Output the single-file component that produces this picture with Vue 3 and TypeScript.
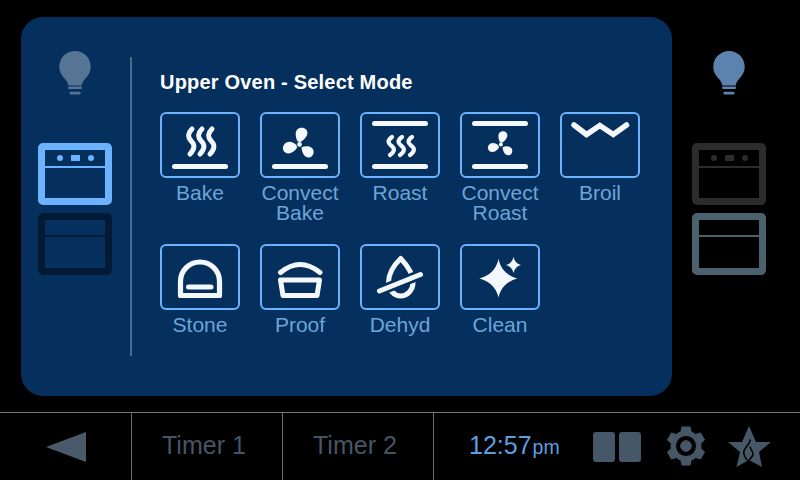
<script setup lang="ts">
interface Shape { d: string; w?: number; fill?: boolean; bg?: boolean; miter?: boolean }
interface Mode { label: string; shapes: Shape[] }

const fanBlades =
  'M37 28.500C35.500 24 35 20 37.200 17.500C40 14.600 47 15 47.400 20.500C47.700 24.200 44 27.800 41 29.700C39.500 30.200 37.600 29.800 37 28.500Z ' +
  'M36.200 32.800C32 29 26.800 28.800 24.200 32.500C21 36.800 24.200 42 29 41.400C33.200 40.900 35.800 37.800 37.200 35.600Z ' +
  'M41.500 35.200C45 33.800 50 33.500 52.400 36.400C55.200 39.800 53 45 49 45.400C44.400 45.900 41.800 40.600 41.500 35.200Z ' +
  'M39.500 30A2.400 2.400 0 1 0 39.500 34.800A2.400 2.400 0 1 0 39.500 30Z'
const smallFan =
  'M39.500 29.500C38.200 26 37.800 22.800 39.500 20.800C41.800 18.400 47 18.800 47.300 23C47.600 26 44.800 28.900 42.300 30.500C41 30.900 39.900 30.500 39.500 29.500Z ' +
  'M38.300 33.200C35 30.300 30.800 30 28.800 33C26.400 36.300 28.800 40.400 32.700 40C35.900 39.600 37.900 37.100 39 35.400Z ' +
  'M42.600 35.300C45.400 34 49.200 33.800 51.300 36.100C53.500 38.800 51.800 42.900 48.700 43.300C45 43.700 42.900 39.500 42.600 35.300Z ' +
  'M40.900 30.400A2 2 0 1 0 40.900 34.400A2 2 0 1 0 40.900 30.400Z'
const wave = (x: number, top: number, bottom: number): string => {
  const h = bottom - top
  return `M${x + 2} ${top}C${x - 3} ${top + h * 0.2} ${x - 2} ${top + h * 0.33} ${x + 1} ${top + h * 0.47}C${x + 5} ${top + h * 0.62} ${x + 5} ${top + h * 0.8} ${x} ${bottom}`
}
const waves = (top: number, bottom: number, w: number): Shape[] =>
  [30, 40, 50].map((x) => ({ d: wave(x, top, bottom), w }))

const modes: Mode[] = [
  { label: 'Bake', shapes: [...waves(17, 42, 5), { d: 'M14.500 54.500H65.500' }] },
  { label: 'Convect Bake', shapes: [{ d: fanBlades, fill: true }, { d: 'M14.500 54.500H65.500' }] },
  { label: 'Roast', shapes: [{ d: 'M14.500 11.500H65.500' }, ...waves(25, 43, 4.200), { d: 'M14.500 54.500H65.500' }] },
  { label: 'Convect Roast', shapes: [{ d: 'M14.500 11.500H65.500' }, { d: smallFan, fill: true }, { d: 'M14.500 54.500H65.500' }] },
  { label: 'Broil', shapes: [{ d: 'M14 13L26.500 22.500L39.800 13.500L53.300 22.500L66.500 13', w: 5.500, miter: true }] },
  {
    label: 'Stone',
    shapes: [
      { d: 'M20.500 51.500V37.500A19.500 19.500 0 0 1 59.500 37.500V51.500Z', w: 5.200 },
      { d: 'M28.500 43H51', w: 5 },
    ],
  },
  {
    label: 'Proof',
    shapes: [
      { d: 'M20.500 28.500Q40 12.500 60 28.500', w: 5 },
      { d: 'M20.500 36H59.500L57 51.500H23Z', w: 5 },
    ],
  },
  {
    label: 'Dehyd',
    shapes: [
      { d: 'M40.700 14.500C35 20 28.500 28 28.500 38.500A12.250 13.500 0 0 0 53 38.500C53 28 46 20 40.700 14.500Z', w: 5 },
      { d: 'M18 47.500L62 30', w: 10, bg: true },
      { d: 'M19.500 47L60.500 30.500', w: 5 },
    ],
  },
  {
    label: 'Clean',
    shapes: [
      {
        d: 'M38.500 15C41 26 47.500 31.600 57.500 34.500C47.500 37.400 41 43 38.500 53.500C36 43 29.500 37.400 19.500 34.500C29.500 31.600 36 26 38.500 15Z',
        fill: true,
      },
      {
        d: 'M53.500 13C54.500 17.500 57 20 61 21C57 22 54.500 24.500 53.500 29C52.500 24.500 50 22 46 21C50 20 52.500 17.500 53.500 13Z',
        fill: true,
      },
    ],
  },
]

const bulb =
  'M16 1C7.300 1 .3 8 .3 16.500C.3 22.500 3 25.600 6.400 29.500C8.200 31.600 9 33.500 9.300 35.500H22.700C23 33.500 23.800 31.600 25.600 29.500C29 25.600 31.700 22.500 31.700 16.500C31.700 8 24.700 1 16 1Z'

const gearPath = (): string => {
  const cx = 20
  const cy = 20
  const pt = (r: number, deg: number): string => {
    const a = (deg * Math.PI) / 180
    return `${(cx + r * Math.cos(a)).toFixed(2)} ${(cy + r * Math.sin(a)).toFixed(2)}`
  }
  let d = ''
  for (let k = 0; k < 6; k++) {
    const a = k * 60 - 90
    d += `${k === 0 ? 'M' : 'L'}${pt(15, a - 20)}L${pt(19.5, a - 12)}L${pt(19.5, a + 12)}L${pt(15, a + 20)}A15 15 0 0 1 ${pt(15, a + 40)}`
  }
  d += 'Z'
  const ring = (r: number): string =>
    `M${cx} ${cy - r}A${r} ${r} 0 1 0 ${cx} ${cy + r}A${r} ${r} 0 1 0 ${cx} ${cy - r}Z`
  return d + ring(10.5) + ring(5.3)
}
const gear = gearPath()
</script>

<template>
  <div class="screen">
    <main class="stage">
      <section class="panel">
        <aside class="side">
          <svg class="bulb bulb-left" width="32" height="46" viewBox="0 0 32 46">
            <path :d="bulb" />
            <rect x="9" y="36.500" width="14" height="2.600" rx="1" />
            <rect x="10.500" y="41.800" width="11" height="2.600" rx="1" />
          </svg>
          <div class="ovens">
            <div class="oven oven-active">
              <div class="oven-top">
                <i class="dot"></i><i class="slot"></i><i class="dot"></i>
              </div>
            </div>
            <div class="oven oven-dim">
              <div class="oven-top"></div>
            </div>
          </div>
        </aside>
        <div class="divider"></div>
        <div class="content">
          <h1 class="title">Upper Oven - Select Mode</h1>
          <div class="modes">
            <div v-for="mode in modes" :key="mode.label" class="mode">
              <div class="tile">
                <svg width="80" height="66" viewBox="0 0 80 66">
                  <path
                    v-for="(s, i) in mode.shapes"
                    :key="i"
                    :d="s.d"
                    :fill="s.fill ? '#f4f8fc' : 'none'"
                    :stroke="s.fill ? 'none' : s.bg ? '#052f5d' : '#f4f8fc'"
                    :stroke-width="s.w ?? 5"
                    stroke-linecap="round"
                    :stroke-linejoin="s.miter ? 'miter' : 'round'"
                  />
                </svg>
              </div>
              <div class="label">{{ mode.label }}</div>
            </div>
          </div>
        </div>
      </section>
      <aside class="right">
        <svg class="bulb bulb-right" width="32" height="46" viewBox="0 0 32 46">
          <path :d="bulb" />
          <rect x="9" y="36.500" width="14" height="2.600" rx="1" />
          <rect x="10.500" y="41.800" width="11" height="2.600" rx="1" />
        </svg>
        <div class="ovens">
          <div class="oven oven-gray">
            <div class="oven-top">
              <i class="dot"></i><i class="slot"></i><i class="dot"></i>
            </div>
          </div>
          <div class="oven oven-slate">
            <div class="oven-top"></div>
          </div>
        </div>
      </aside>
    </main>
    <footer class="bar">
      <div class="cell back">
        <svg width="40" height="30" viewBox="0 0 40 30"><path d="M0 15L40 0V30Z" /></svg>
      </div>
      <div class="cell timer">Timer 1</div>
      <div class="cell timer">Timer 2</div>
      <div class="cell clock">12:57<span class="ampm">pm</span></div>
      <div class="tools">
        <svg width="48" height="30" viewBox="0 0 48 30">
          <rect width="22" height="30" rx="3" />
          <rect x="26" width="22" height="30" rx="3" />
        </svg>
        <svg class="gear" width="40" height="40" viewBox="0 0 40 40">
          <path fill-rule="evenodd" :d="gear" stroke="#465767" stroke-width="1" stroke-linejoin="round" />
        </svg>
        <svg class="star" width="44" height="41" viewBox="0 0 44 41">
          <path d="M21 0L28 16H43L31 26L34 41L21 34L8.500 41L12 26L0 16H14Z" />
          <path class="flame" d="M22.300 14C21 20 15.700 22 15.700 26.300C15.700 29.500 17.500 32 19 34" />
          <path class="flame" d="M22.300 21.300C22.500 24 25 25 25 28C25 30.500 23 32 21 34" />
        </svg>
      </div>
    </footer>
  </div>
</template>

<style>
html,
body {
  margin: 0;
  background: #000;
}
</style>

<style scoped>
.screen {
  width: 800px;
  height: 480px;
  background: #000;
  display: flex;
  flex-direction: column;
  overflow: hidden;
  font-family: "Liberation Sans", Arial, sans-serif;
}
.stage {
  height: 412px;
  display: flex;
  padding: 17px 0 16px 21px;
  box-sizing: border-box;
}
.panel {
  width: 651px;
  height: 379px;
  background: #052f5d;
  border-radius: 22px;
  display: flex;
}
.side {
  width: 109px;
  display: flex;
  flex-direction: column;
  align-items: center;
  padding: 33px 1px 0 0;
  box-sizing: border-box;
}
.bulb {
  display: block;
  fill: currentColor;
  flex: none;
}
.bulb-left {
  color: #567595;
}
.bulb-right {
  color: #5b83ae;
}
.ovens {
  display: flex;
  flex-direction: column;
  gap: 8px;
  margin-top: 47px;
}
.oven {
  width: 74px;
  height: 62px;
  box-sizing: border-box;
  border: 7px solid currentColor;
  border-radius: 5px;
}
.oven-top {
  height: 16px;
  border-bottom: 2px solid currentColor;
  display: flex;
  align-items: center;
  justify-content: center;
  gap: 8px;
}
.oven-dim .oven-top,
.oven-slate .oven-top {
  height: 15px;
}
.dot {
  width: 6px;
  height: 6px;
  border-radius: 50%;
  background: currentColor;
}
.slot {
  width: 9px;
  height: 6px;
  background: currentColor;
}
.oven-active {
  color: #6bb2ff;
}
.oven-dim {
  color: #031a36;
}
.oven-gray {
  color: #2c2c2c;
}
.oven-slate {
  color: #4b616e;
}
.divider {
  width: 2px;
  height: 299px;
  margin-top: 40px;
  background: #4c6c8e;
}
.content {
  padding: 54px 0 0 28px;
}
.title {
  margin: 0 0 18px;
  font-size: 20px;
  line-height: 23px;
  font-weight: 700;
  color: #fff;
  letter-spacing: 0.2px;
}
.modes {
  display: grid;
  grid-template-columns: repeat(5, 80px);
  grid-auto-rows: 132px;
  column-gap: 20px;
}
.mode {
  display: flex;
  flex-direction: column;
  align-items: center;
}
.tile {
  width: 80px;
  height: 66px;
  box-sizing: border-box;
  border: 2px solid #6bb2ff;
  border-radius: 6px;
  position: relative;
  flex: none;
}
.tile svg {
  position: absolute;
  left: -2px;
  top: -2px;
  display: block;
}
.label {
  margin-top: 5px;
  width: 84px;
  font-size: 21px;
  line-height: 20px;
  color: #6ea5d8;
  text-align: center;
}
.right {
  width: 114px;
  display: flex;
  flex-direction: column;
  align-items: center;
  padding-top: 33px;
  box-sizing: border-box;
}
.bar {
  height: 68px;
  border-top: 1px solid #757575;
  display: flex;
  box-sizing: border-box;
}
.cell {
  display: flex;
  align-items: center;
  box-sizing: border-box;
  border-right: 1px solid #6e6e6e;
  font-size: 25px;
  padding-bottom: 3px;
}
.back {
  width: 132px;
  padding: 0 0 0 46px;
}
.back svg {
  fill: #4a5a6b;
  display: block;
}
.timer {
  width: 151px;
  color: #465565;
  padding-left: 30px;
}
.clock {
  width: 154px;
  border-right: none;
  color: #5e9fe0;
  padding-left: 35px;
  align-items: baseline;
  padding-top: 18px;
}
.ampm {
  font-size: 19.500px;
  margin-left: 1px;
}
.tools {
  display: flex;
  align-items: center;
  padding-left: 5px;
  gap: 25px;
}
.tools svg {
  fill: #465767;
  display: block;
}
.gear {
  margin-top: -1px;
}
.star {
  margin-left: -3px;
}
.flame {
  fill: none;
  stroke: #000;
  stroke-width: 1.500;
  stroke-linecap: round;
}
</style>
